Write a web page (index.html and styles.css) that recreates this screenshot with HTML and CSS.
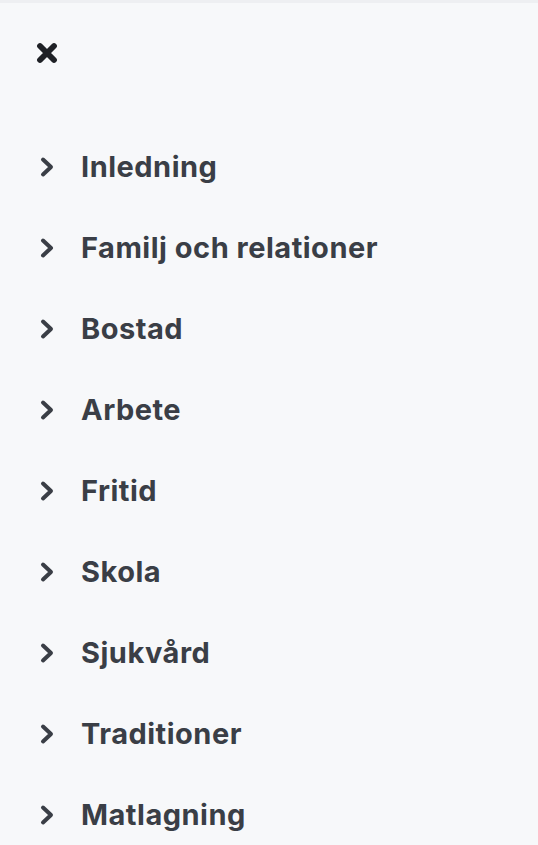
FILE: index.html
```html
<!DOCTYPE html>
<html lang="sv">
<head>
  <meta charset="UTF-8" />
  <meta name="viewport" content="width=device-width, initial-scale=1.0" />
  <title>Meny</title>
  <link rel="stylesheet" href="styles.css">
</head>
<body>
  <nav class="menu">
    <button class="close-btn" aria-label="Stäng">
      <svg viewBox="0 0 22 22" width="22" height="22">
        <path d="M4 4 L18 18 M18 4 L4 18" stroke="#1f2126" stroke-width="5.8" stroke-linecap="round" fill="none"/>
      </svg>
    </button>

    <ul class="menu-list">
      <li><a href="#"><svg class="chev" viewBox="0 0 16 22" width="16" height="22"><path d="M4 3.5 L12 11 L4 18.5" /></svg>Inledning</a></li>
      <li><a href="#"><svg class="chev" viewBox="0 0 16 22" width="16" height="22"><path d="M4 3.5 L12 11 L4 18.5" /></svg>Familj och relationer</a></li>
      <li><a href="#"><svg class="chev" viewBox="0 0 16 22" width="16" height="22"><path d="M4 3.5 L12 11 L4 18.5" /></svg>Bostad</a></li>
      <li><a href="#"><svg class="chev" viewBox="0 0 16 22" width="16" height="22"><path d="M4 3.5 L12 11 L4 18.5" /></svg>Arbete</a></li>
      <li><a href="#"><svg class="chev" viewBox="0 0 16 22" width="16" height="22"><path d="M4 3.5 L12 11 L4 18.5" /></svg>Fritid</a></li>
      <li><a href="#"><svg class="chev" viewBox="0 0 16 22" width="16" height="22"><path d="M4 3.5 L12 11 L4 18.5" /></svg>Skola</a></li>
      <li><a href="#"><svg class="chev" viewBox="0 0 16 22" width="16" height="22"><path d="M4 3.5 L12 11 L4 18.5" /></svg>Sjukvård</a></li>
      <li><a href="#"><svg class="chev" viewBox="0 0 16 22" width="16" height="22"><path d="M4 3.5 L12 11 L4 18.5" /></svg>Traditioner</a></li>
      <li><a href="#"><svg class="chev" viewBox="0 0 16 22" width="16" height="22"><path d="M4 3.5 L12 11 L4 18.5" /></svg>Matlagning</a></li>
    </ul>
  </nav>
</body>
</html>
```

FILE: styles.css
```css
body {
  font-family: Inter, "Noto Sans", sans-serif;
  margin: 0;
  padding: 0;
  background-color: #f7f8fa;
  border-top: 3px solid #eeeff2;
}
.menu {
  padding: 39px 0 0 36px;
}
.close-btn {
  display: block;
  background: none;
  border: none;
  padding: 0;
  width: 22px;
  height: 22px;
  cursor: pointer;
}
.close-btn svg {
  display: block;
}
.menu-list {
  list-style-type: none;
  padding: 0;
  margin: 85px 0 0 3px;
}
.menu-list li {
  height: 81px;
}
.menu-list a {
  display: flex;
  align-items: center;
  gap: 26px;
  color: #3a3e46;
  text-decoration: none;
  font-size: 29px;
  font-weight: 700;
  letter-spacing: 0.5px;
  line-height: 36px;
}
.chev {
  display: block;
  flex-shrink: 0;
}
.chev path {
  fill: none;
  stroke: #3a3e46;
  stroke-width: 4;
  stroke-linecap: round;
  stroke-linejoin: round;
}
```
